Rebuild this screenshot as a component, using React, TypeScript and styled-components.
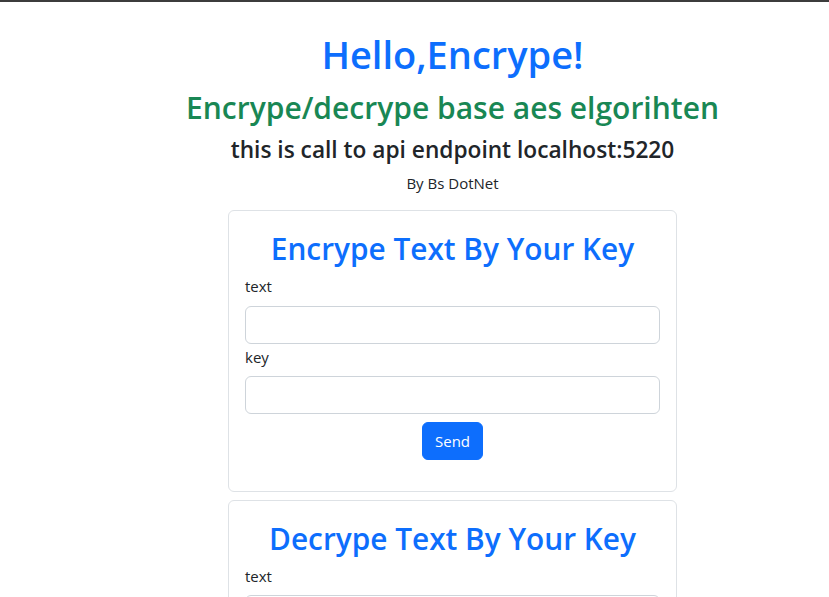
import styled, { createGlobalStyle } from 'styled-components';

const GlobalStyle = createGlobalStyle`
  html, body {
    margin: 0;
    padding: 0;
    background: #fff;
    overflow: hidden;
  }
  body {
    font-family: 'Open Sans', 'Noto Sans', sans-serif;
    font-size: 16px;
    line-height: 1.5;
    color: #212529;
    border-top: 2px solid #3c3c3c;
  }
  * {
    box-sizing: border-box;
  }
`;

const forms = [
  { key: 'enc', title: 'Encrype Text By Your Key' },
  { key: 'dec', title: 'Decrype Text By Your Key' },
];

export default function App() {
  return (
    <>
      <GlobalStyle />
      <StyledPage>
        <Hero>
          <Title>Hello,Encrype!</Title>
          <Subtitle>Encrype/decrype base aes elgorihten</Subtitle>
          <Endpoint>this is call to api endpoint localhost:5220</Endpoint>
          <Author>By Bs DotNet</Author>
        </Hero>

        {forms.map((form) => (
          <Card key={form.key}>
            <CardTitle>{form.title}</CardTitle>
            <Field>
              <Label htmlFor={`${form.key}-text`}>text</Label>
              <Input id={`${form.key}-text`} type="text" />
            </Field>
            <Field>
              <Label htmlFor={`${form.key}-key`}>key</Label>
              <Input id={`${form.key}-key`} type="text" />
            </Field>
            <Actions>
              <Button type="button">Send</Button>
            </Actions>
          </Card>
        ))}
      </StyledPage>
    </>
  );
}

const StyledPage = styled.main`
  display: flex;
  flex-direction: column;
  align-items: center;
  padding: 30px 0 0 76px;
`;

const Hero = styled.header`
  display: flex;
  flex-direction: column;
  align-items: center;
  text-align: center;
  margin-bottom: 16px;
`;

const Title = styled.h1`
  margin: 0 0 12px;
  font-size: 38px;
  font-weight: 600;
  line-height: 1.2;
  color: #0d6efd;
`;

const Subtitle = styled.h2`
  margin: 0 0 10px;
  font-size: 30px;
  font-weight: 600;
  line-height: 1.2;
  color: #198754;
`;

const Endpoint = styled.h4`
  margin: 0 0 9px;
  font-size: 22.7px;
  font-weight: 600;
  line-height: 1.2;
  color: #212529;
`;

const Author = styled.p`
  margin: 0;
  font-size: 15px;
`;

const Card = styled.section`
  width: 449px;
  display: flex;
  flex-direction: column;
  padding: 16px 16px 31px;
  border: 1px solid #dee2e6;
  border-radius: 6px;
  margin-bottom: 8px;
`;

const CardTitle = styled.h2`
  margin: 0 0 6px;
  padding-top: 4px;
  text-align: center;
  font-size: 29.8px;
  font-weight: 600;
  line-height: 1.2;
  color: #0d6efd;
`;

const Field = styled.div`
  display: flex;
  flex-direction: column;
`;

const Label = styled.label`
  display: block;
  margin: 2px 0 8px;
  font-size: 15px;
`;

const Input = styled.input`
  display: block;
  width: 100%;
  height: 38px;
  padding: 6px 12px;
  font-size: 16px;
  font-family: inherit;
  color: #212529;
  background: #fff;
  border: 1px solid #ced4da;
  border-radius: 6px;
  outline: none;
`;

const Actions = styled.div`
  display: flex;
  justify-content: center;
  margin-top: 8px;
`;

const Button = styled.button`
  height: 38px;
  padding: 6px 12px;
  font-family: inherit;
  font-size: 15px;
  color: #fff;
  background: #0d6efd;
  border: 1px solid #0d6efd;
  border-radius: 6px;
  cursor: pointer;
`;
